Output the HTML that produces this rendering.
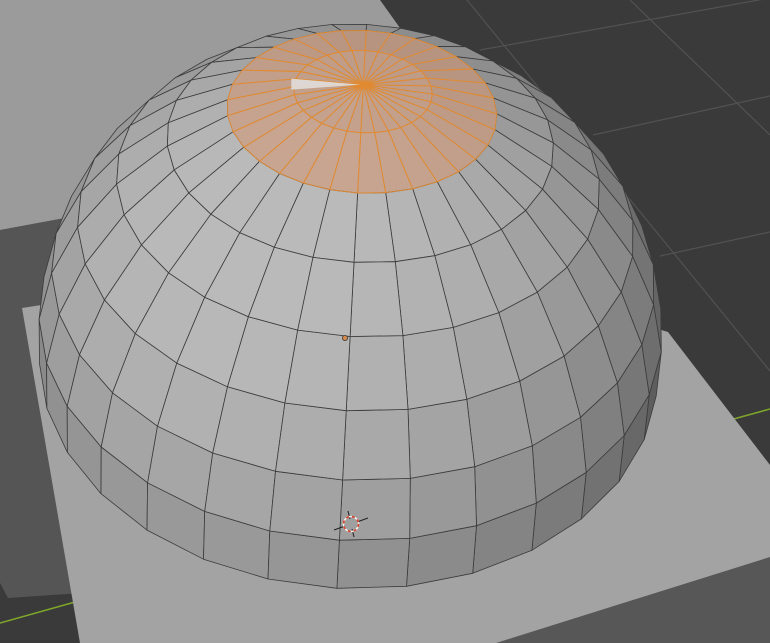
<!DOCTYPE html>
<html><head><meta charset="utf-8"><style>
html,body{margin:0;padding:0;background:#3a3a3a;}
svg{display:block;}
</style></head><body>
<svg id="s" width="770" height="643" viewBox="0 0 770 643" xmlns="http://www.w3.org/2000/svg">
<rect width="770" height="643" fill="#3a3a3a"/>
<g stroke="#525252" stroke-width="1.2" fill="none">
<line x1="467" y1="0" x2="770" y2="371"/>
<line x1="630" y1="0" x2="770" y2="135"/>
<line x1="480" y1="50" x2="770" y2="-2"/>
<line x1="593" y1="135" x2="770" y2="96"/>
<line x1="660" y1="256" x2="770" y2="232"/>
</g>
<line x1="730" y1="420" x2="770" y2="409" stroke="#7fa62a" stroke-width="1.5"/>
<line x1="0" y1="623" x2="75" y2="602" stroke="#7fa62a" stroke-width="1.5"/>
<polygon points="0,230 70,217 200,195 200,585 8,598 0,583" fill="#555555"/>
<polygon points="0,0 380,0 430,70 300,200 70,217 0,230" fill="#9b9b9b"/>
<polygon points="480,643 770,545 770,643" fill="#575757"/>
<polygon points="22,308 100,296 400,250 668,332 770,465 770,557 496,643 80,643" fill="#a3a3a3"/>
<g id="dome"></g>
<polygon id="hl" points="288,70 355,76 288,82" fill="#e2e2e2" opacity="0.85"/>
<circle cx="345" cy="338" r="2.6" fill="#d68a4a" stroke="#3a3a3a" stroke-width="0.8"/>
<g transform="translate(351,524)">
<line x1="-17" y1="6" x2="-6" y2="2" stroke="#222" stroke-width="1"/>
<line x1="6" y1="-2" x2="17" y2="-6" stroke="#222" stroke-width="1"/>
<line x1="-3" y1="-13" x2="-1" y2="-5" stroke="#222" stroke-width="1"/>
<line x1="1" y1="5" x2="3" y2="13" stroke="#222" stroke-width="1"/>
<circle r="7.5" fill="none" stroke="#f2f2f2" stroke-width="1.6"/>
<circle r="7.5" fill="none" stroke="#d8402a" stroke-width="1.6" stroke-dasharray="3 3"/>
</g>
</svg>
<script>
(function(){
var e=45*Math.PI/180,D=5,f=1570,cx=350,cy=335,rot=3*Math.PI/180;
var ce=Math.cos(e),se=Math.sin(e),cr=Math.cos(rot),sr=Math.sin(rot);
var NR=8,NS=32;
function cam(phi,th){var x=Math.cos(phi)*Math.sin(th),d=Math.cos(phi)*Math.cos(th),z=Math.sin(phi);
return [x,z*ce-d*se,z*se+d*ce];}
function proj(c){var k=f/(D-c[2]);var X=c[0]*k,Y=-c[1]*k;
var sx=cx+X*cr-Y*sr, sy=cy+X*sr+Y*cr;
sx=355+(sx-355)*0.975; sy=594-(594-sy)*0.975-5;
return [sx,sy];}
var faces=[];
for(var i=0;i<NR;i++){
 var p0=i*Math.PI/2/NR,p1=(i+1)*Math.PI/2/NR;
 for(var j=0;j<NS;j++){
  var t0=j*2*Math.PI/NS,t1=(j+1)*2*Math.PI/NS;
  var pts=i==NR-1?[cam(p0,t0),cam(p0,t1),cam(p1,0)]:[cam(p0,t0),cam(p0,t1),cam(p1,t1),cam(p1,t0)];
  var pm=(p0+p1)/2,tm=(t0+t1)/2;var n=cam(pm,tm);
  var v=[-n[0],-n[1],D-n[2]];
  if(n[0]*v[0]+n[1]*v[1]+n[2]*v[2]<=0)continue;
  var L=[-0.25,0.25,0.93],ll=Math.hypot(L[0],L[1],L[2]);
  var dt=(n[0]*L[0]+n[1]*L[1]+n[2]*L[2])/ll;
  var g=Math.max(60,Math.min(186,Math.round(96+92*dt)));
  faces.push({pts:pts.map(proj),z:n[2],g:g,cap:i>=NR-2});
 }
}
faces.sort(function(a,b){return a.z-b.z;});
var out='',caps='';
faces.forEach(function(F){
 var s=F.pts.map(function(p){return p[0].toFixed(1)+','+p[1].toFixed(1);}).join(' ');
 var col;
 if(F.cap){var r=Math.round(F.g*0.62+225*0.38),gg=Math.round(F.g*0.62+135*0.38),b=Math.round(F.g*0.62+80*0.38);col='rgb('+r+','+gg+','+b+')';
  out+='<polygon points="'+s+'" fill="'+col+'" stroke="'+col+'" stroke-width="0.5"/>';
  caps+='<polygon points="'+s+'" fill="none" stroke="#e08a32" stroke-width="0.9" stroke-linejoin="round"/>';}
 else{col='rgb('+F.g+','+F.g+','+F.g+')';
  out+='<polygon points="'+s+'" fill="'+col+'" stroke="#3b3b3b" stroke-width="0.8" stroke-linejoin="round"/>';}
});
document.getElementById('dome').innerHTML=out+caps;
var P=proj(cam(Math.PI/2,0));
document.getElementById('hl').setAttribute('points',(P[0]-72)+','+(P[1]-6)+' '+(P[0]-3)+','+P[1]+' '+(P[0]-72)+','+(P[1]+5));
})();
</script>
</body></html>
